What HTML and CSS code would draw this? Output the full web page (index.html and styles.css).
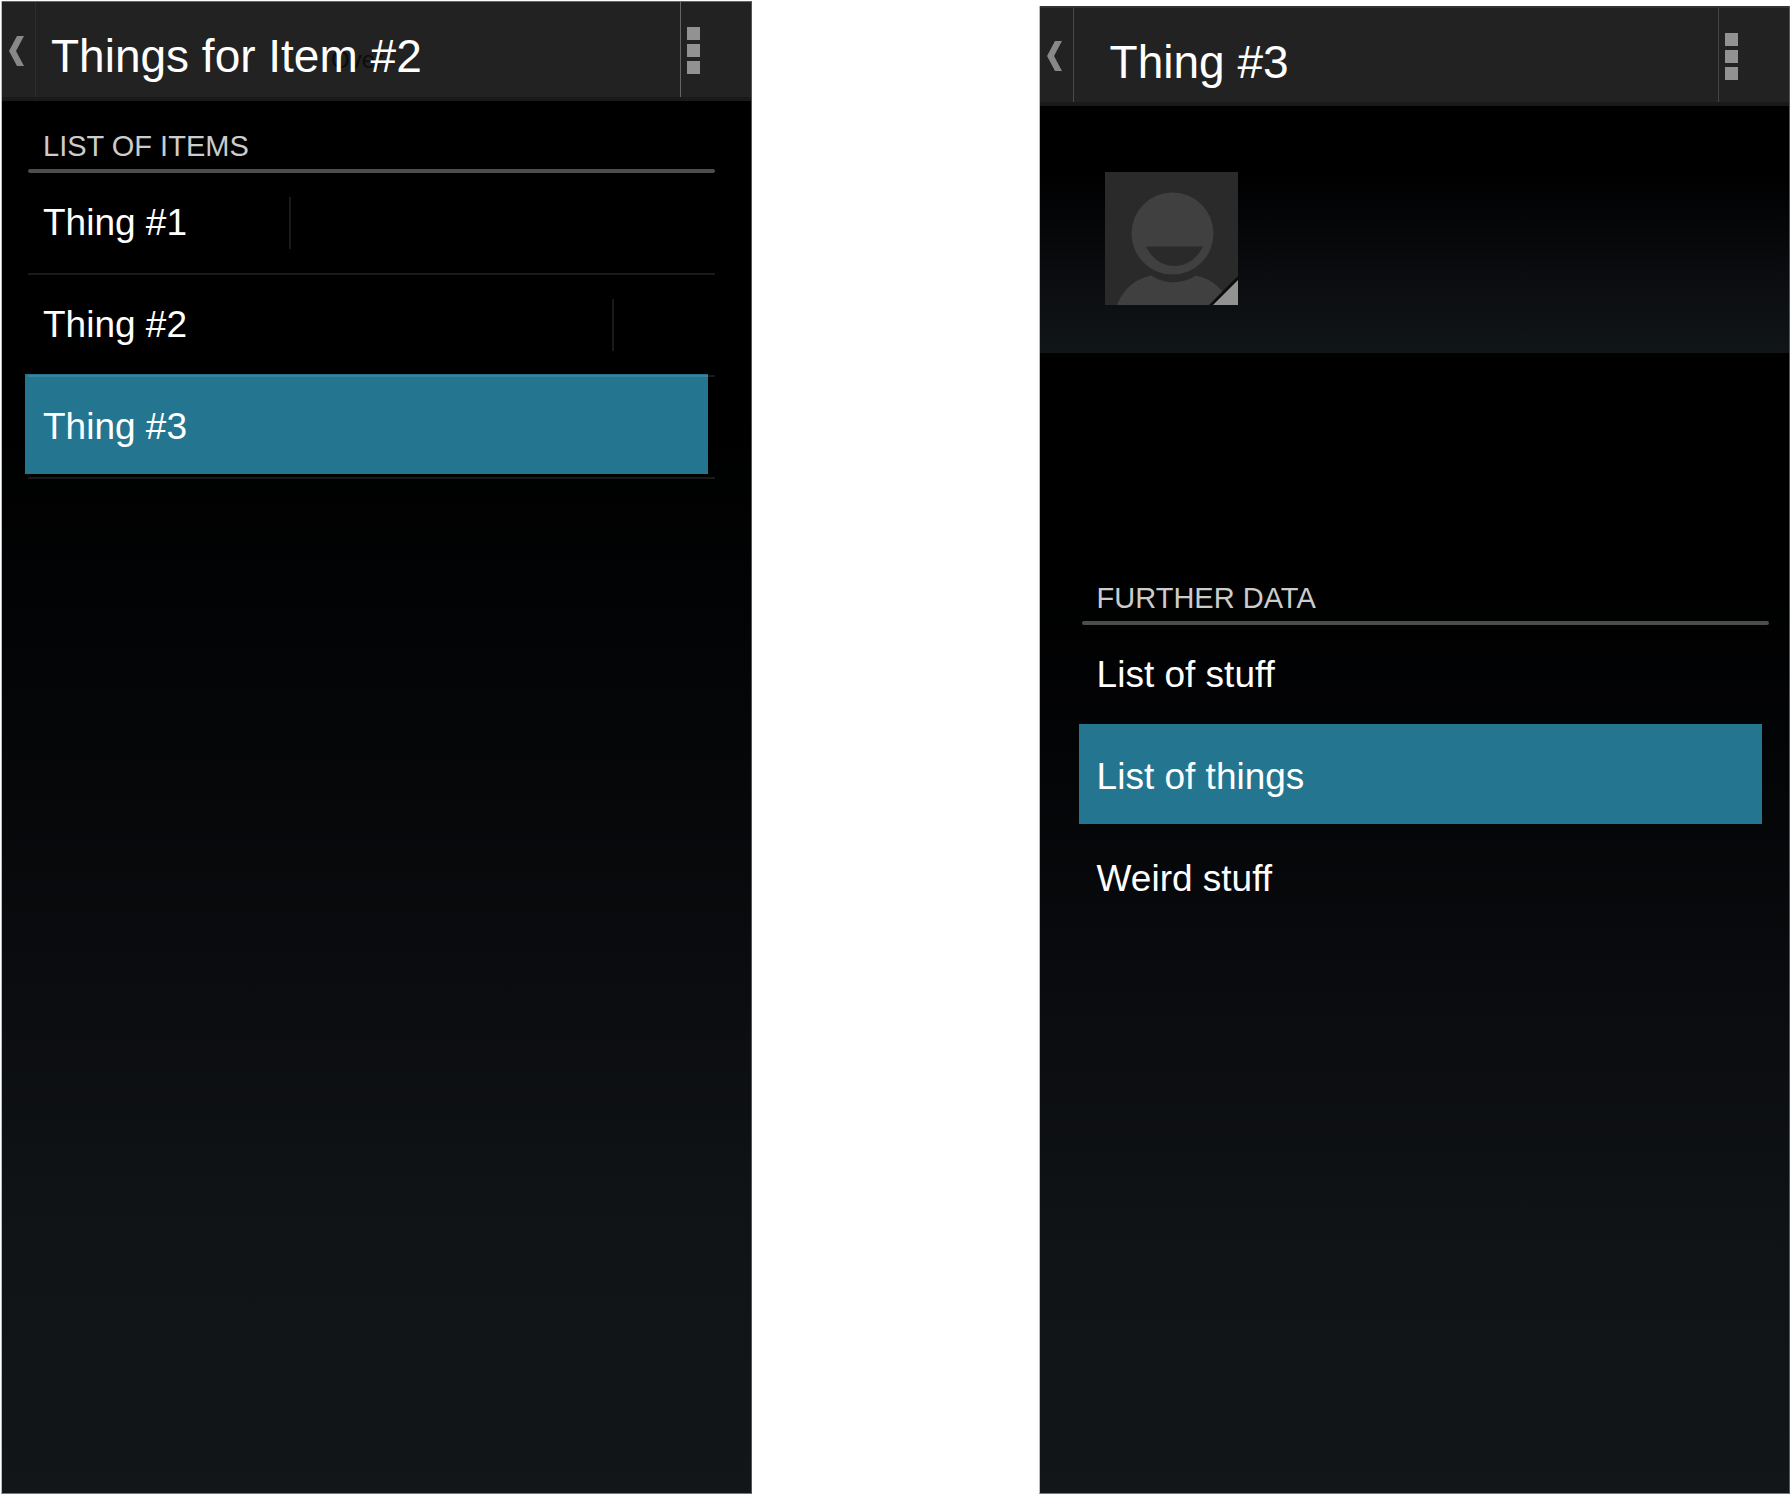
FILE: index.html
```html
<!DOCTYPE html>
<html lang="en">
<head>
  <meta charset="UTF-8">
  <meta name="viewport" content="width=device-width, initial-scale=1.0">
  <title>Things for Item #2</title>
  <link rel="stylesheet" href="styles.css">
</head>
<body>
  <main class="screens">
    <section class="screen list-screen">
      <header class="action-bar">
        <a href="#items" class="back" aria-label="Back">
          <svg width="16" height="30" viewBox="0 0 16 30">
            <path d="M8 0H15L7 15L15 30H8L0 15Z" fill="#888"/>
          </svg>
        </a>
        <h1><span class="ghost">Over</span><span class="title">Things for Item #2</span></h1>
        <button type="button" class="menu-btn" aria-label="More options">
          <span class="dot"></span>
          <span class="dot"></span>
          <span class="dot"></span>
        </button>
      </header>

      <div class="group">
        <h2>LIST OF ITEMS</h2>
        <ul class="items lined">
          <li><a href="#thing1" class="narrow">Thing #1</a><span class="tick"></span></li>
          <li><a href="#thing2" class="wide">Thing #2</a><span class="tick"></span></li>
          <li class="selected"><a href="#thing3">Thing #3</a></li>
        </ul>
      </div>
    </section>

    <section class="screen detail-screen" id="thing3">
      <header class="action-bar">
        <a href="#list" class="back" aria-label="Back">
          <svg width="16" height="30" viewBox="0 0 16 30">
            <path d="M8 0H15L7 15L15 30H8L0 15Z" fill="#888"/>
          </svg>
        </a>
        <h1><span class="title">Thing #3</span></h1>
        <button type="button" class="menu-btn" aria-label="More options">
          <span class="dot"></span>
          <span class="dot"></span>
          <span class="dot"></span>
        </button>
      </header>

      <div class="profile">
        <svg class="avatar" width="133" height="133" viewBox="0 0 133 133" role="img" aria-label="Contact picture">
          <rect width="133" height="133" fill="#2a2a2a"/>
          <circle cx="67.5" cy="61.5" r="41" fill="#404040"/>
          <path d="M41 74.500H98C92 87 81 94 69.500 94C58 94 47 87 41 74.500Z" fill="#2a2a2a"/>
          <path d="M12 133C18 118 29 107 46 103.500C59 112.500 77 112.500 91 103.500C108 107 119 118 126 133Z" fill="#404040"/>
          <path d="M133 104V133H104Z" fill="#0c0c0c"/>
          <path d="M133 108V133H108Z" fill="#929292"/>
        </svg>
      </div>

      <div class="group">
        <h2>FURTHER DATA</h2>
        <ul class="items">
          <li><a href="#stuff">List of stuff</a></li>
          <li class="selected"><a href="#things">List of things</a></li>
          <li><a href="#weird">Weird stuff</a></li>
        </ul>
      </div>
    </section>
  </main>
</body>
</html>
```
FILE: styles.css
```css
* {
  box-sizing: border-box;
}

body {
  font-family: "Liberation Sans", Arial, Helvetica, sans-serif;
  margin: 0;
  background-color: #fff;
  color: #fff;
}

.screens {
  display: grid;
  grid-template-columns: 1fr 1fr;
  column-gap: 16%;
  min-height: 100vh;
  padding: 1px 0 0 1px;
}

.screen {
  border: 1px solid #777;
  border-top: none;
  border-left-color: #bbb;
  border-right-color: #555;
  background: linear-gradient(#000 0%, #000 27%, #020304 40%, #0b0c0f 66%, #0f1316 80%, #131618 100%);
}

.detail-screen {
  margin-top: 5px;
  background: linear-gradient(#000 0%, #000 38%, #030406 50%, #0b0c0f 68%, #0f1316 82%, #131618 100%);
}

/* Action bar */
.action-bar {
  display: flex;
  height: 100px;
  background-color: #222;
  border-top: 1px solid #666;
  border-bottom: 4px solid #1a1a1a;
}
.detail-screen .action-bar {
  border-top: 2px solid #333;
}

.back {
  display: flex;
  align-items: center;
  width: 34px;
  padding: 2px 0 0 7px;
  border-right: 1px solid #2e2e2e;
}
.detail-screen .back {
  border-right-color: #4a4a4a;
}

h1 {
  position: relative;
  flex: 1;
  margin: 0;
  padding: 14px 0 0 15px;
  font-size: 46px;
  font-weight: normal;
  line-height: 80px;
}
.detail-screen h1 {
  padding-left: 36px;
}
.title {
  position: relative;
}
.ghost {
  position: absolute;
  top: 18px;
  left: 295px;
  color: #0c0c0c;
  font-size: 24px;
}

.menu-btn {
  display: flex;
  flex-direction: column;
  justify-content: center;
  gap: 4px;
  width: 71px;
  padding: 2px 0 0 6px;
  background: none;
  border: none;
  border-left: 1px solid #666;
  cursor: pointer;
}
.detail-screen .menu-btn {
  border-left-color: #444;
}
.dot {
  width: 13px;
  height: 13px;
  background-color: #929292;
}

/* Profile */
.profile {
  height: 247px;
  padding: 66px 65px 0;
  background: linear-gradient(#000 0%, #000 27%, #020304 38%, #0c0d10 72%, #101518 100%);
}
.avatar {
  display: block;
}

/* Lists */
.group {
  padding: 29px 36px 0 26px;
}
.detail-screen .group {
  padding: 229px 20px 0 42px;
}

h2 {
  margin: 0;
  padding: 0 15px 7px;
  color: #ccc;
  font-size: 29px;
  font-weight: normal;
  line-height: 32px;
}

.items {
  position: relative;
  z-index: 0;
  list-style: none;
  margin: 0;
  padding: 0;
}
.items::before {
  content: "";
  display: block;
  height: 4px;
  border-radius: 2px;
  background-color: #4d4d4d;
}
.items li {
  position: relative;
  display: flex;
  align-items: center;
  border-bottom: 2px solid transparent;
}
.lined li {
  border-bottom-color: rgba(255, 255, 255, 0.1);
}
.items a {
  flex: 1;
  padding: 0 15px;
  color: #fff;
  font-size: 37px;
  line-height: 100px;
  text-decoration: none;
}
.items .narrow {
  flex: 0 0 38%;
}
.items .wide {
  flex: 0 0 85%;
}
.tick {
  width: 2px;
  height: 52px;
  background-color: #1a1a1a;
}

/* highlight sits under the row lines */
.selected::before {
  content: "";
  position: absolute;
  z-index: -1;
  top: -3px;
  right: 7px;
  bottom: 3px;
  left: -3px;
  background-color: #24758f;
}
```
